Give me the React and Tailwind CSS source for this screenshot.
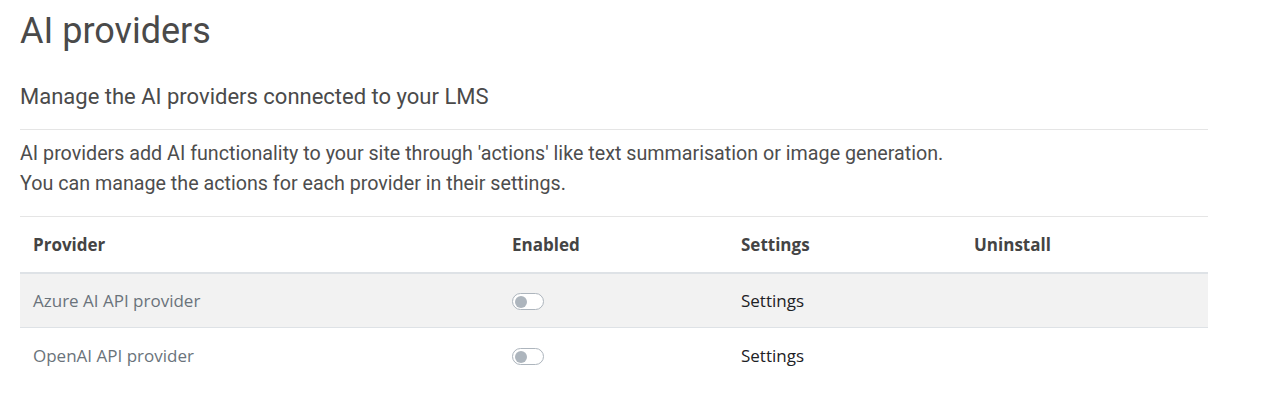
import React from 'react'

const PROVIDERS = [
  { name: 'Azure AI API provider' },
  { name: 'OpenAI API provider' },
]

// ── Toggle switch (off state) ────────────────────────────────────────────────

function Toggle() {
  return (
    <span className="inline-flex items-center w-[32px] h-[17px] rounded-full border border-[#adb5bd] bg-white px-[2px]">
      <span className="block w-[12px] h-[12px] rounded-full bg-[#adb5bd]" />
    </span>
  )
}

// ── Page ─────────────────────────────────────────────────────────────────────

export default function App() {
  return (
    <div className="min-h-screen bg-white text-[#4d4d4d] px-[20px] font-['Roboto',sans-serif]">
      <div className="w-[1188px]">
        <h1 className="text-[36px] leading-[43px] pt-[10px] text-[#4a4a4a]">AI providers</h1>

        <h3 className="text-[22px] leading-[27px] mt-[30px] text-[#4a4a4a]">
          Manage the AI providers connected to your LMS
        </h3>

        <div className="border-t border-[#e5e5e5] mt-[19px] pt-[9px] pb-[17px] text-[19.7px] leading-[30px] text-[#4d4d4d]">
          <p>AI providers add AI functionality to your site through 'actions' like text summarisation or image generation.</p>
          <p>You can manage the actions for each provider in their settings.</p>
        </div>

        <table className="w-full border-t border-[#e5e5e5] font-['Open_Sans',sans-serif] text-[17px] border-collapse">
          <thead>
            <tr className="border-b-2 border-[#dee2e6] h-[56px]">
              <th className="text-left font-bold text-[#444] px-[13px] w-[479px]">Provider</th>
              <th className="text-left font-bold text-[#444] px-[13px] w-[229px]">Enabled</th>
              <th className="text-left font-bold text-[#444] px-[13px] w-[233px]">Settings</th>
              <th className="text-left font-bold text-[#444] px-[13px]">Uninstall</th>
            </tr>
          </thead>
          <tbody>
            {PROVIDERS.map((p, i) => (
              <tr key={p.name} className={`h-[55px] ${i === 0 ? 'bg-[#f2f2f2] border-b border-[#dee2e6]' : 'bg-white'}`}>
                <td className="px-[13px] text-[#6a737b]">{p.name}</td>
                <td className="px-[13px] pt-[2px]"><Toggle /></td>
                <td className="px-[13px] text-[#1d2125]">Settings</td>
                <td className="px-[13px]" />
              </tr>
            ))}
          </tbody>
        </table>
      </div>
    </div>
  )
}
